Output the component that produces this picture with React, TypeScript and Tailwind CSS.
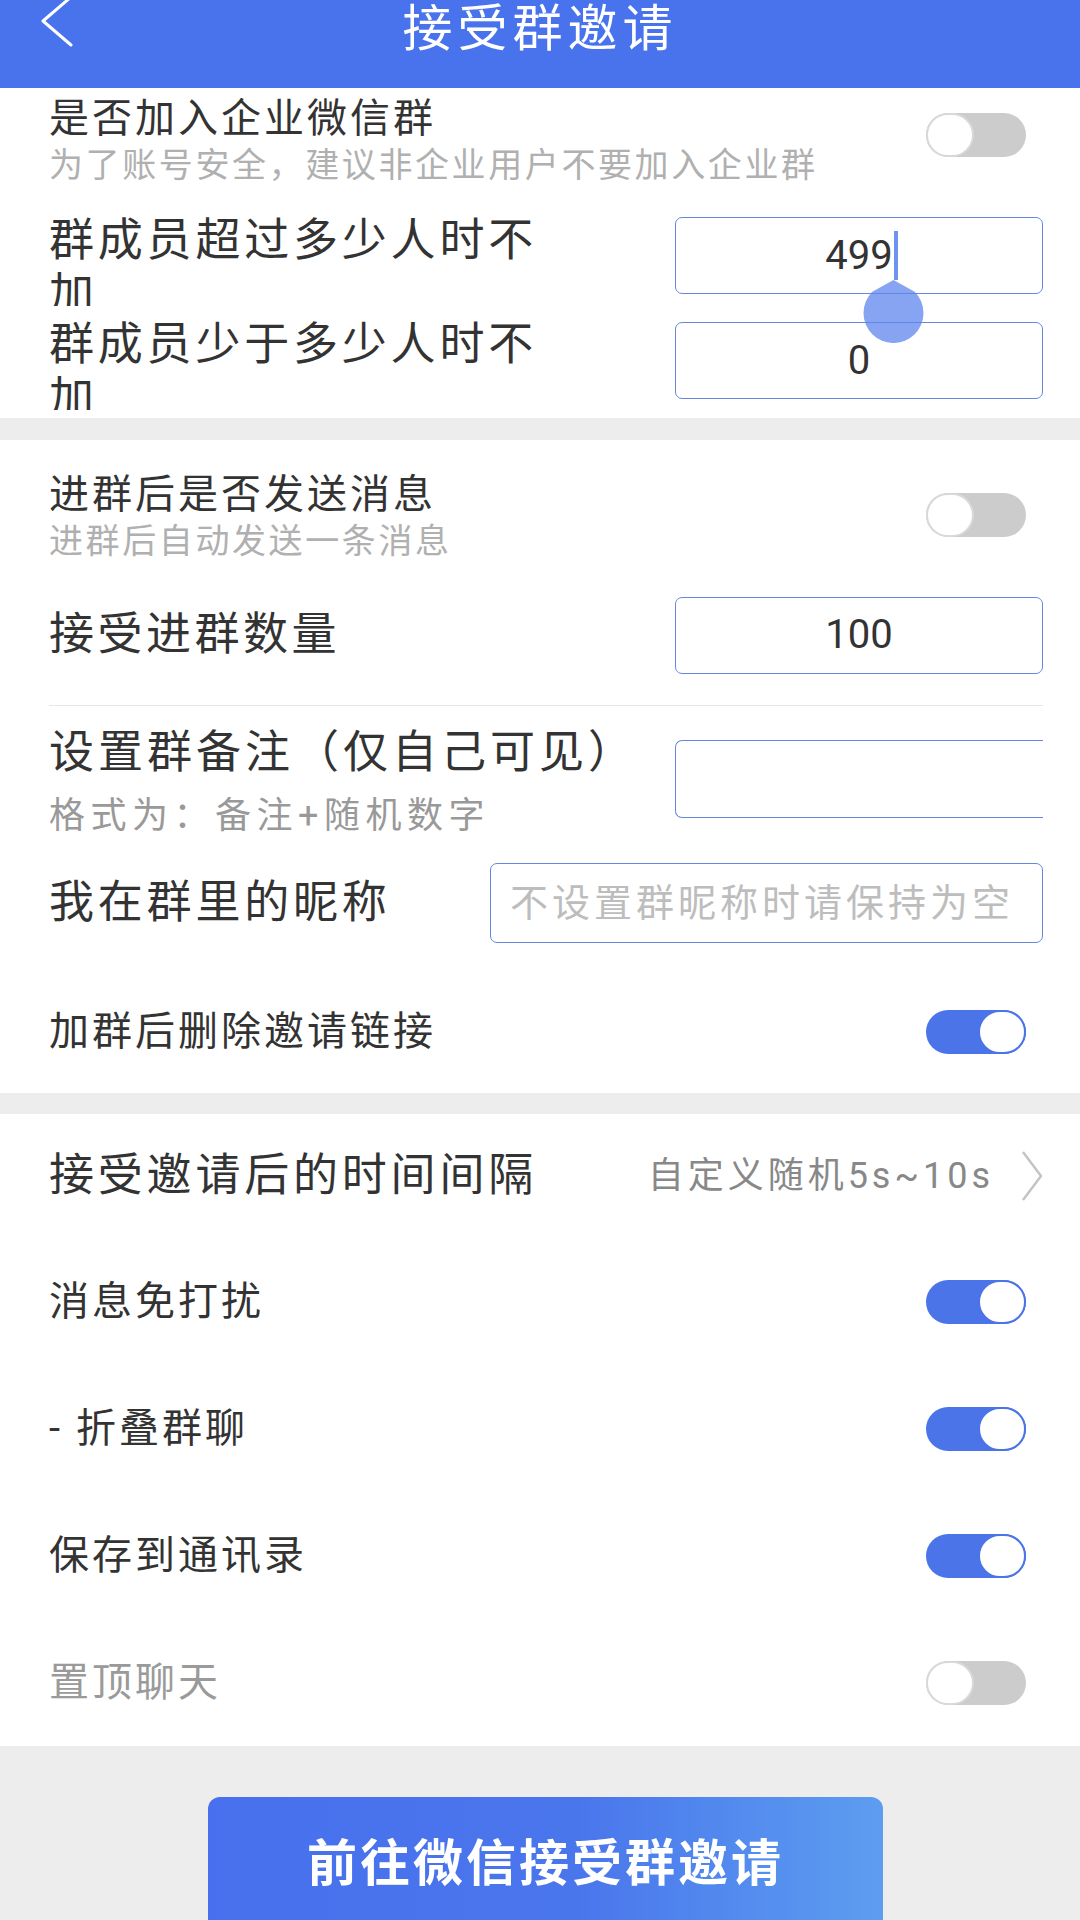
import React from 'react';

const Toggle = ({ on }: { on?: boolean }) => (
  <div className={`flex h-[44px] w-[100px] shrink-0 rounded-full ${on ? 'justify-end bg-[#4a74e8]' : 'justify-start bg-[#cccccc]'}`}>
    <div className={`h-[44px] w-[48px] rounded-full border-2 bg-white ${on ? 'border-[#4a74e8]' : 'border-[#d9d9d9]'}`} />
  </div>
);

const NumInput = ({ value }: { value: string }) => (
  <div className="flex h-[77px] w-[368px] shrink-0 items-center justify-center rounded-[7px] border-[1.5px] border-[#6587e0] text-[40px] text-[#333]">
    {value}
  </div>
);

const SwitchRow = ({ label, on, muted, h = 'h-[127px]' }: { label: string; on?: boolean; muted?: boolean; h?: string }) => (
  <div className={`flex ${h} items-center justify-between pl-[49px] pr-[54px]`}>
    <span className={`text-[40px] tracking-[3px] ${muted ? 'text-[#9a9a9a]' : 'text-[#333]'}`}>{label}</span>
    <Toggle on={on} />
  </div>
);

export default function App() {
  return (
    <div className="h-[1920px] w-[1080px] overflow-hidden bg-[#ededed] font-['Roboto','Noto_Sans_CJK_SC',sans-serif]">
      {/* 顶部标题栏 */}
      <div className="grid h-[88px] grid-cols-[1fr_auto_1fr] bg-[#4873ec]">
        <div className="pl-[40px]">
          <svg width="34" height="48" viewBox="0 0 34 48" fill="none">
            <polyline points="31,-3 3,21 31,45" stroke="white" strokeWidth="3" strokeLinecap="round" strokeLinejoin="round" />
          </svg>
        </div>
        <h1 className="text-[50px] leading-[58px] tracking-[5px] text-white">接受群邀请</h1>
        <div />
      </div>

      {/* 第一组 */}
      <div className="bg-white pb-[8px] pl-[49px] pr-[37px] pt-[8px]">
        <div className="flex items-start justify-between">
          <div>
            <div className="text-[40px] leading-[46px] tracking-[3px] text-[#333]">是否加入企业微信群</div>
            <div className="text-[34px] leading-[46px] tracking-[2.6px] text-[#b0b0b0]">为了账号安全，建议非企业用户不要加入企业群</div>
          </div>
          <div className="mr-[17px] mt-[17px]">
            <Toggle />
          </div>
        </div>
        <div className="mt-[26px] flex h-[92px] items-start justify-between">
          <div className="h-[92px] w-[510px] overflow-hidden text-[45px] leading-[54px] tracking-[3.8px] text-[#333]">群成员超过多少人时不加</div>
          <div className="relative mt-[3px]">
            <NumInput value="499" />
            {/* 光标和拖动手柄 */}
            <div className="absolute left-[219px] top-[14px] h-[49px] w-[4px] bg-[#6f92ee]" />
            <svg className="absolute left-[188px] top-[63px] z-10" width="61" height="63" viewBox="0 0 61 63">
              <path d="M30.5 0 L51.7 11.8 A30 30 0 1 1 9.3 11.8 Z" fill="#5f86ee" fillOpacity="0.75" />
            </svg>
          </div>
        </div>
        <div className="mt-[12px] flex h-[92px] items-start justify-between">
          <div className="h-[92px] w-[510px] overflow-hidden text-[45px] leading-[54px] tracking-[3.8px] text-[#333]">群成员少于多少人时不加</div>
          <div className="mt-[4px]">
            <NumInput value="0" />
          </div>
        </div>
      </div>

      {/* 第二组 */}
      <div className="mt-[22px] bg-white">
        <div className="flex h-[150px] items-center justify-between pl-[49px] pr-[54px]">
          <div className="pt-[6px]">
            <div className="text-[40px] leading-[46px] tracking-[3px] text-[#333]">进群后是否发送消息</div>
            <div className="text-[34px] leading-[46px] tracking-[2.6px] text-[#b0b0b0]">进群后自动发送一条消息</div>
          </div>
          <Toggle />
        </div>
        <div className="flex h-[90px] items-center justify-between pl-[49px] pr-[37px]">
          <span className="text-[45px] tracking-[3.5px] text-[#333]">接受进群数量</span>
          <NumInput value="100" />
        </div>
        <div className="ml-[49px] mr-[37px] mt-[25px] h-px bg-[#e6e6e6]" />
        <div className="flex h-[157px] items-start justify-between pl-[49px] pr-[37px] pt-[19px]">
          <div>
            <div className="text-[45px] leading-[56px] tracking-[4px] text-[#333]">设置群备注（仅自己可见）</div>
            <div className="mt-[10px] text-[36px] leading-[50px] tracking-[5.5px] text-[#999]">格式为：备注+随机数字</div>
          </div>
          <div className="mt-[15px] h-[78px] w-[368px] shrink-0 rounded-l-[7px] border-[1.5px] border-r-0 border-[#6587e0]" />
        </div>
        <div className="flex h-[80px] items-center justify-between pl-[49px] pr-[37px]">
          <span className="text-[45px] tracking-[3.8px] text-[#333]">我在群里的昵称</span>
          <div className="flex h-[80px] w-[553px] items-center rounded-[7px] border-[1.5px] border-[#6587e0] pl-[19px] text-[38px] tracking-[4px] text-[#bdbdbd]">
            不设置群昵称时请保持为空
          </div>
        </div>
        <SwitchRow label="加群后删除邀请链接" on h="mt-[28px] h-[122px]" />
      </div>

      {/* 第三组 */}
      <div className="mt-[21px] bg-white">
        <div className="flex h-[124px] items-center justify-between pl-[49px] pr-[37px]">
          <span className="text-[45px] tracking-[3.8px] text-[#333]">接受邀请后的时间间隔</span>
          <div className="flex items-center gap-[27px]">
            <span className="text-[36px] tracking-[4px] text-[#888]">自定义随机5s~10s</span>
            <svg width="22" height="52" viewBox="0 0 22 52" fill="none">
              <polyline points="2,2 20,26 2,50" stroke="#c4c4c4" strokeWidth="2.5" />
            </svg>
          </div>
        </div>
        <SwitchRow label="消息免打扰" on />
        <SwitchRow label="- 折叠群聊" on />
        <SwitchRow label="保存到通讯录" on />
        <SwitchRow label="置顶聊天" muted />
      </div>

      {/* 底部按钮 */}
      <div className="ml-[208px] mt-[51px] flex h-[134px] w-[675px] items-center justify-center rounded-[12px] bg-gradient-to-r from-[#4870ee] via-[#4a76ec] via-55% to-[#5d9df0]">
        <span className="text-[50px] font-bold tracking-[3px] text-white">前往微信接受群邀请</span>
      </div>
    </div>
  );
}
